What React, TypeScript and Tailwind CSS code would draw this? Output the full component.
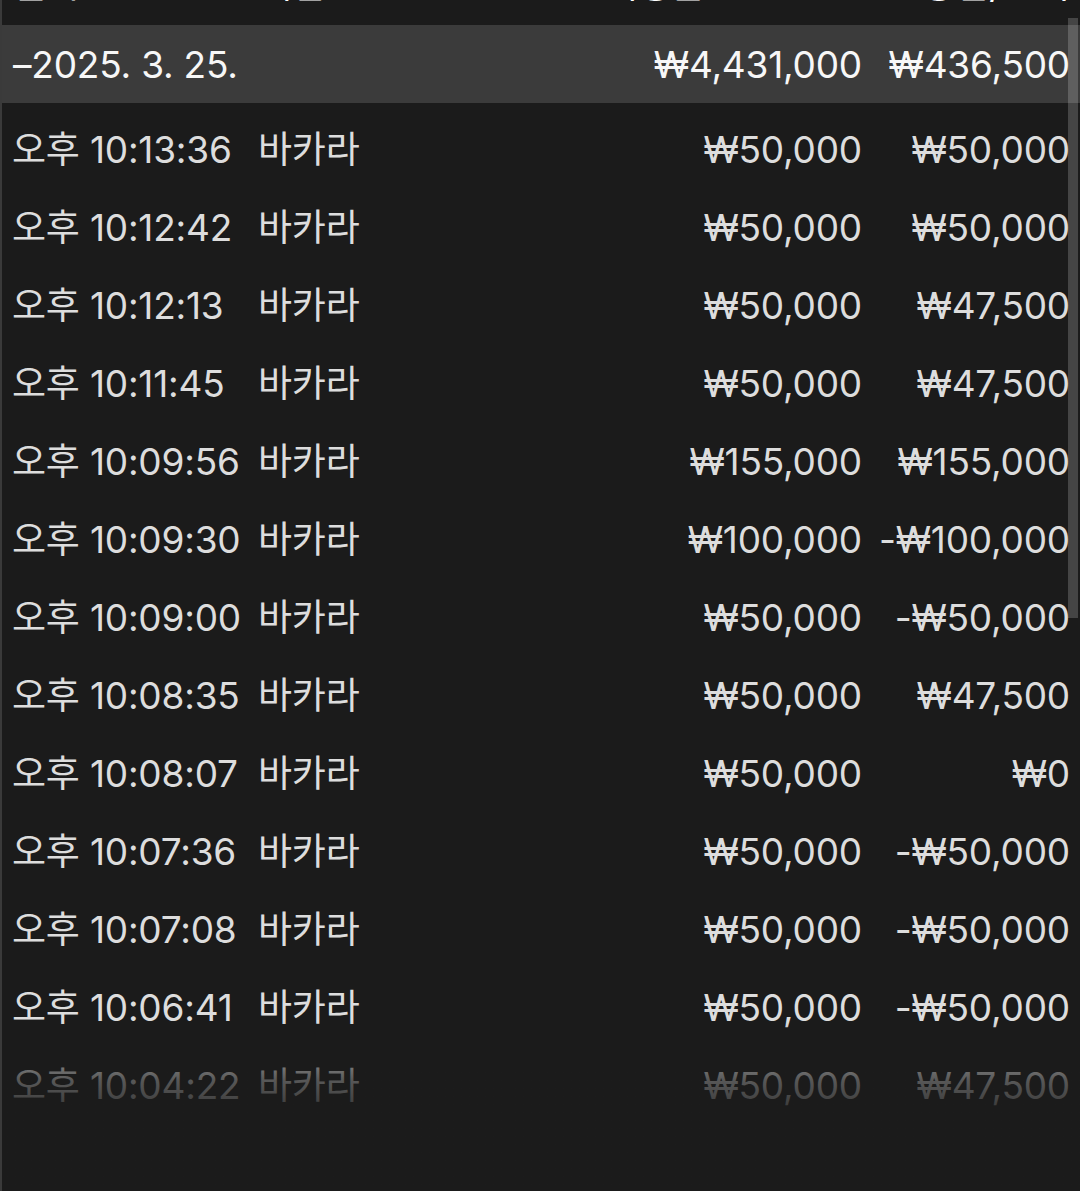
const rows = [
  { time: "오후 10:13:36", bet: "₩50,000", result: "₩50,000" },
  { time: "오후 10:12:42", bet: "₩50,000", result: "₩50,000" },
  { time: "오후 10:12:13", bet: "₩50,000", result: "₩47,500" },
  { time: "오후 10:11:45", bet: "₩50,000", result: "₩47,500" },
  { time: "오후 10:09:56", bet: "₩155,000", result: "₩155,000" },
  { time: "오후 10:09:30", bet: "₩100,000", result: "-₩100,000" },
  { time: "오후 10:09:00", bet: "₩50,000", result: "-₩50,000" },
  { time: "오후 10:08:35", bet: "₩50,000", result: "₩47,500" },
  { time: "오후 10:08:07", bet: "₩50,000", result: "₩0" },
  { time: "오후 10:07:36", bet: "₩50,000", result: "-₩50,000" },
  { time: "오후 10:07:08", bet: "₩50,000", result: "-₩50,000" },
  { time: "오후 10:06:41", bet: "₩50,000", result: "-₩50,000" },
  { time: "오후 10:04:22", bet: "₩50,000", result: "₩47,500" },
  { time: "오후 10:03:51", bet: "₩50,000", result: "₩50,000" },
];

const font = { fontFamily: 'Inter, "Noto Sans CJK KR", sans-serif' };

export default function App() {
  return (
    <div
      className="relative h-[1191px] w-[1080px] overflow-hidden bg-[#1b1b1b] text-[37px] leading-none tracking-[-0.2px]"
      style={font}
    >
      {/* left edge line */}
      <div className="absolute left-0 top-0 h-full w-[2px] bg-[#3a3a3a]" />

      {/* header, mostly scrolled off */}
      <div className="h-[25px] overflow-hidden pl-3 pr-[10px] text-white">
        <div className="-mt-[34px] flex h-[37px] w-full items-end">
          <span className="w-[246px]">일시</span>
          <span>게임</span>
          <span className="flex-1 text-right pr-[215px]">베팅금</span>
          <span className="w-[150px] text-right">당첨/손익</span>
        </div>
      </div>

      {/* date group row */}
      <div className="flex h-[78px] items-center bg-[#3b3b3b] pl-[13px] pr-[10px] text-[#f7f7f7]">
        <span className="flex-1">–2025. 3. 25.</span>
        <span className="text-right">₩4,431,000</span>
        <span className="w-[208px] text-right">₩436,500</span>
      </div>

      <div className="pt-[7px]">
        {rows.map((r, i) => (
          <div key={i} className="flex h-[78px] items-center pl-3 pr-[10px] text-[#dddddd]">
            <span className="w-[246px]">{r.time}</span>
            <span className="flex-1">바카라</span>
            <span className="text-right">{r.bet}</span>
            <span className="w-[208px] text-right">{r.result}</span>
          </div>
        ))}
      </div>

      {/* bottom fade */}
      <div className="pointer-events-none absolute bottom-0 left-[2px] right-0 h-[170px] bg-gradient-to-b from-[#1b1b1b00] from-0% via-[#1b1b1bb0] via-35% to-[#1b1b1b] to-70%" />

      {/* scrollbar */}
      <div className="absolute right-[2px] top-[18px] h-[600px] w-[10px] bg-white/[0.19]" />
    </div>
  );
}
